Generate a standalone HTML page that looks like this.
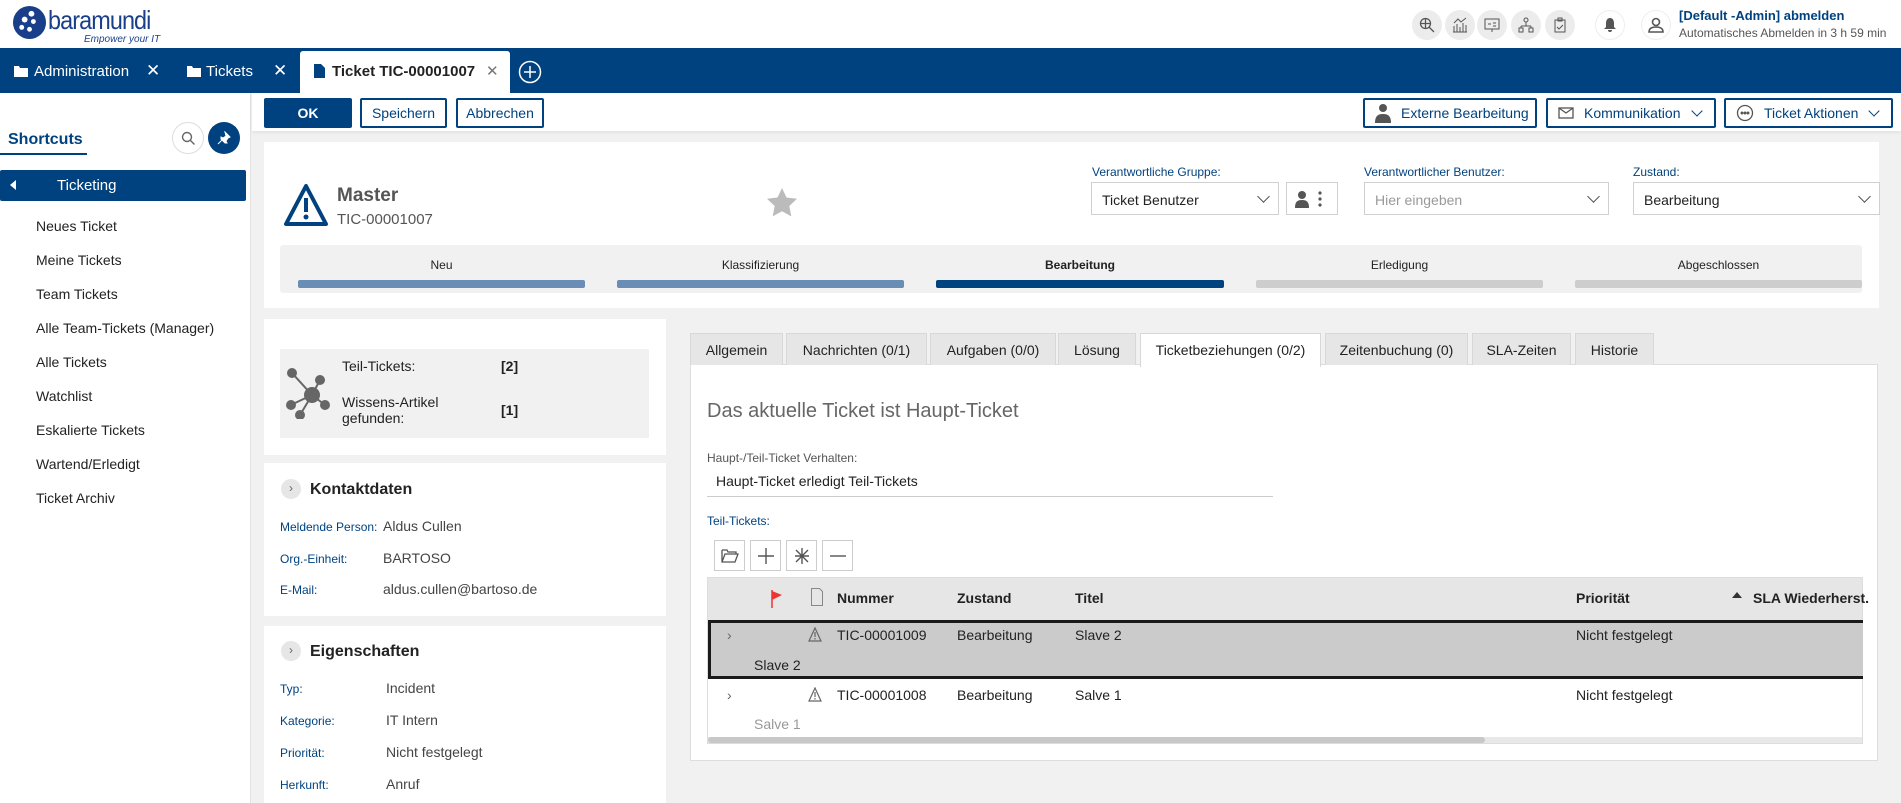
<!DOCTYPE html>
<html><head><meta charset="utf-8"><style>
*{box-sizing:border-box;margin:0;padding:0}
body{width:1901px;height:803px;overflow:hidden;background:#f1f1f1;font-family:"Liberation Sans",sans-serif;color:#222;position:relative;font-size:14px}
.a{position:absolute}
.hdr{left:0;top:0;width:1901px;height:48px;background:#fff}
.bar{left:0;top:48px;width:1901px;height:45px;background:#00427f}
.tab{color:#fff;font-size:15px;top:63px}
.circ{width:30px;height:30px;border-radius:50%;background:#ececec;top:10px;display:flex;align-items:center;justify-content:center}
.side{left:0;top:93px;width:251px;height:710px;background:#fff;border-right:1px solid #e2e2e2}
.mi{left:36px;font-size:14px;color:#222}
.btn{top:98px;height:30px;border:2px solid #00427f;background:#fff;color:#00427f;font-size:14px;display:flex;align-items:center;justify-content:center;border-radius:2px}
.card{background:#fff}
.lbl{font-size:12px;color:#00427f}
.sel{height:33px;border:1px solid #d0d0d0;background:#fff;font-size:14px;padding:9px 10px;color:#222}
.chev{position:absolute;right:10px;top:9px;width:9px;height:9px;border-right:1.5px solid #555;border-bottom:1.5px solid #555;transform:rotate(45deg)}
.pl{top:258px;font-size:12px;text-align:center}
.pb{top:280px;height:8px;border-radius:2px}
.tb{top:333px;height:32px;background:#e6e6e6;border:1px solid #d8d8d8;border-bottom:none;font-size:14px;padding-top:8px;text-align:center}
.th{font-weight:bold;font-size:14px;top:590px}
.td{font-size:14px}
.ib{top:540px;width:31px;height:31px;border:1px solid #ccc;background:#fff;display:flex;align-items:center;justify-content:center}
</style></head><body>
<div class="a hdr"></div>
<svg class="a" style="left:12px;top:5px" width="35" height="35" viewBox="0 0 36 36"><circle cx="18" cy="18" r="17" fill="#1a3f8a"/><circle cx="20" cy="9" r="3" fill="#fff"/><circle cx="13" cy="15" r="3" fill="#fff"/><circle cx="22" cy="17" r="2.5" fill="#fff"/><circle cx="10" cy="23" r="2.5" fill="#fff"/><circle cx="18" cy="25" r="2.5" fill="#fff"/></svg>
<div class="a" style="left:48px;top:5px;font-size:26px;color:#1a3f8a;letter-spacing:-1px;transform:scaleX(.9);transform-origin:left">baramundi</div>
<div class="a" style="left:84px;top:34px;font-size:10px;color:#1a3f8a;font-style:italic">Empower your IT</div>
<div class="a circ" style="left:1412px"><svg width="16" height="16" fill="none" stroke="#555" stroke-width="1.3"><circle cx="6.5" cy="6.5" r="5"/><path d="M2 6.5h9M6.5 2v9M10 10l5 5"/></svg></div>
<div class="a circ" style="left:1445px"><svg width="16" height="16" viewBox="0 0 16 16" fill="none" stroke="#555"><path d="M2 15V9M5 15V7M8 15V10M11 15V6M14 15V8M1 15h14M2 6l4-4 3 3 5-4"/></svg></div>
<div class="a circ" style="left:1477px"><svg width="16" height="16" viewBox="0 0 16 16" fill="none" stroke="#555"><rect x="1" y="2" width="14" height="10"/><path d="M8 12v3M4 7h3M9 6h3M9 9h3"/></svg></div>
<div class="a circ" style="left:1511px"><svg width="16" height="16" viewBox="0 0 16 16" fill="none" stroke="#555"><circle cx="8" cy="3" r="2"/><path d="M8 5v4M3 9h10M3 9v2M13 9v2"/><rect x="1" y="11" width="4" height="4"/><rect x="11" y="11" width="4" height="4"/></svg></div>
<div class="a circ" style="left:1545px"><svg width="16" height="16" viewBox="0 0 16 16" fill="none" stroke="#555"><rect x="3" y="3" width="10" height="12"/><rect x="6" y="1" width="4" height="3"/><path d="M5 10l2 2 4-4"/></svg></div>
<div class="a circ" style="left:1595px;background:#fff;border:1px solid #eee"><svg width="14" height="16" viewBox="0 0 14 16"><path d="M7 1c3 0 4 3 4 5v4l2 2H1l2-2V6c0-2 1-5 4-5zM5 13h4a2 2 0 0 1-4 0" fill="#555"/></svg></div>
<div class="a circ" style="left:1641px;background:#fff;border:1px solid #eee"><svg width="18" height="18" viewBox="0 0 18 18" fill="none" stroke="#555" stroke-width="1.6"><circle cx="9" cy="6" r="3.5"/><path d="M2 16c0-4 3-5 7-5s7 1 7 5z"/></svg></div>
<div class="a" style="left:1679px;top:8px;font-size:13px;font-weight:bold;color:#00427f">[Default -Admin] abmelden</div>
<div class="a" style="left:1679px;top:26px;font-size:12px;color:#555">Automatisches Abmelden in 3 h 59 min</div>

<div class="a bar"></div>
<svg class="a" style="left:14px;top:65px" width="14" height="12"><path d="M0 1h5l1 2h8v9H0z" fill="#fff"/></svg>
<div class="a tab" style="left:34px">Administration</div>
<div class="a tab" style="left:146px;top:61px;font-size:17px">✕</div>
<svg class="a" style="left:187px;top:65px" width="14" height="12"><path d="M0 1h5l1 2h8v9H0z" fill="#fff"/></svg>
<div class="a tab" style="left:206px">Tickets</div>
<div class="a tab" style="left:273px;top:61px;font-size:17px">✕</div>
<div class="a" style="left:300px;top:51px;width:210px;height:42px;background:#fff;border-radius:3px 3px 0 0"></div>
<svg class="a" style="left:314px;top:64px" width="11" height="14"><path d="M0 0h7l4 4v10H0z" fill="#00427f"/></svg>
<div class="a" style="left:332px;top:63px;font-size:15px;font-weight:bold;color:#222">Ticket TIC-00001007</div>
<div class="a" style="left:486px;top:62px;font-size:15px;color:#777">✕</div>
<svg class="a" style="left:518px;top:60px" width="24" height="24" fill="none" stroke="#fff" stroke-width="1.5"><circle cx="12" cy="12" r="10.5"/><path d="M12 6v12M6 12h12"/></svg>

<div class="a side"></div>
<div class="a" style="left:8px;top:131px;font-size:16px;font-weight:bold;color:#00427f">Shortcuts</div>
<div class="a" style="left:0;top:153px;width:87px;height:2px;background:#00427f"></div>
<div class="a" style="left:172px;top:122px;width:32px;height:32px;border-radius:50%;border:1px solid #ddd;background:#fff"></div>
<svg class="a" style="left:181px;top:131px" width="14" height="14" fill="none" stroke="#666" stroke-width="1.4"><circle cx="6" cy="6" r="4.5"/><path d="M9.5 9.5l4 4"/></svg>
<div class="a" style="left:208px;top:122px;width:32px;height:32px;border-radius:50%;background:#00427f"></div>
<svg class="a" style="left:217px;top:131px" width="14" height="14"><path d="M8 1l5 5-2 1-2 3 1 2-2 0-4-4 0-2 2 1 3-2z M5 9l-4 4" fill="#fff" stroke="#fff"/></svg>
<div class="a" style="left:0;top:170px;width:246px;height:31px;background:#00427f;border-radius:2px"></div>
<div class="a" style="left:10px;top:180px;width:0;height:0;border-top:5px solid transparent;border-bottom:5px solid transparent;border-right:6px solid #fff"></div>
<div class="a" style="left:57px;top:177px;color:#fff;font-size:15px">Ticketing</div>
<div class="a mi" style="top:218px">Neues Ticket</div>
<div class="a mi" style="top:252px">Meine Tickets</div>
<div class="a mi" style="top:286px">Team Tickets</div>
<div class="a mi" style="top:320px">Alle Team-Tickets (Manager)</div>
<div class="a mi" style="top:354px">Alle Tickets</div>
<div class="a mi" style="top:388px">Watchlist</div>
<div class="a mi" style="top:422px">Eskalierte Tickets</div>
<div class="a mi" style="top:456px">Wartend/Erledigt</div>
<div class="a mi" style="top:490px">Ticket Archiv</div>

<div class="a" style="left:252px;top:93px;width:1649px;height:38px;background:#fff;box-shadow:0 2px 3px rgba(0,0,0,.06)"></div>
<div class="a btn" style="left:264px;width:88px;background:#00427f;color:#fff;font-weight:bold">OK</div>
<div class="a btn" style="left:360px;width:87px">Speichern</div>
<div class="a btn" style="left:456px;width:88px">Abbrechen</div>
<div class="a btn" style="left:1363px;width:174px;justify-content:flex-start;padding-left:10px"><svg width="16" height="20" style="margin-right:10px"><circle cx="8" cy="5" r="4" fill="#555"/><path d="M0 20c0-7 3-9 8-9s8 2 8 9z" fill="#555"/></svg>Externe Bearbeitung</div>
<div class="a btn" style="left:1546px;width:170px;justify-content:flex-start;padding-left:10px"><svg width="16" height="12" style="margin-right:10px" fill="none" stroke="#555" stroke-width="1.3"><rect x="1" y="1" width="14" height="10"/><path d="M1 1l7 5 7-5"/></svg>Kommunikation<span style="margin-left:12px;display:inline-block;width:8px;height:8px;border-right:1.5px solid #00427f;border-bottom:1.5px solid #00427f;transform:rotate(45deg);margin-top:-5px"></span></div>
<div class="a btn" style="left:1724px;width:169px;justify-content:flex-start;padding-left:10px"><svg width="18" height="18" style="margin-right:10px" fill="none" stroke="#555" stroke-width="1.3"><circle cx="9" cy="9" r="7.5"/><circle cx="6" cy="9" r=".8" fill="#555"/><circle cx="9" cy="9" r=".8" fill="#555"/><circle cx="12" cy="9" r=".8" fill="#555"/></svg>Ticket Aktionen<span style="margin-left:12px;display:inline-block;width:8px;height:8px;border-right:1.5px solid #00427f;border-bottom:1.5px solid #00427f;transform:rotate(45deg);margin-top:-5px"></span></div>

<div class="a card" style="left:264px;top:142px;width:1615px;height:166px"></div>
<svg class="a" style="left:283px;top:183px" width="46" height="44"><path d="M23 3L3 41h40z" fill="none" stroke="#00427f" stroke-width="4" stroke-linejoin="round"/><path d="M23 15v14" stroke="#00427f" stroke-width="4"/><circle cx="23" cy="34" r="2.5" fill="#00427f"/></svg>
<div class="a" style="left:337px;top:185px;font-size:19px;font-weight:bold;color:#555">Master</div>
<div class="a" style="left:337px;top:211px;font-size:15px;color:#555">TIC-00001007</div>
<svg class="a" style="left:766px;top:187px" width="32" height="30"><path d="M16 1l4.5 9.5 10.5 1.3-7.7 7.2 2 10.4L16 24.2 6.7 29.4l2-10.4L1 11.8l10.5-1.3z" fill="#bbb"/></svg>
<div class="a lbl" style="left:1092px;top:165px">Verantwortliche Gruppe:</div>
<div class="a sel" style="left:1091px;top:182px;width:188px">Ticket Benutzer<span class="chev"></span></div>
<div class="a sel" style="left:1286px;top:182px;width:52px"><svg width="34" height="18" style="position:absolute;left:8px;top:7px"><circle cx="7" cy="5" r="4" fill="#555"/><path d="M0 18c0-6 2-8 7-8s7 2 7 8z" fill="#555"/><circle cx="25" cy="3" r="1.6" fill="#555"/><circle cx="25" cy="9" r="1.6" fill="#555"/><circle cx="25" cy="15" r="1.6" fill="#555"/></svg></div>
<div class="a lbl" style="left:1364px;top:165px">Verantwortlicher Benutzer:</div>
<div class="a sel" style="left:1364px;top:182px;width:245px;color:#999">Hier eingeben<span class="chev"></span></div>
<div class="a lbl" style="left:1633px;top:165px">Zustand:</div>
<div class="a sel" style="left:1633px;top:182px;width:247px">Bearbeitung<span class="chev"></span></div>
<div class="a" style="left:280px;top:245px;width:1582px;height:48px;background:#f1f1f1;border-radius:3px"></div>
<div class="a pl" style="left:298px;width:287px">Neu</div>
<div class="a pl" style="left:617px;width:287px">Klassifizierung</div>
<div class="a pl" style="left:936px;width:288px;font-weight:bold">Bearbeitung</div>
<div class="a pl" style="left:1256px;width:287px">Erledigung</div>
<div class="a pl" style="left:1575px;width:287px">Abgeschlossen</div>
<div class="a pb" style="left:298px;width:287px;background:#6a8db5"></div>
<div class="a pb" style="left:617px;width:287px;background:#6a8db5"></div>
<div class="a pb" style="left:936px;width:288px;background:#00427f"></div>
<div class="a pb" style="left:1256px;width:287px;background:#cdcdcd"></div>
<div class="a pb" style="left:1575px;width:287px;background:#cdcdcd"></div>

<div class="a card" style="left:264px;top:319px;width:402px;height:136px"></div>
<div class="a" style="left:280px;top:349px;width:369px;height:89px;background:#f1f1f1"></div>
<svg class="a" style="left:282px;top:363px" width="52" height="56" stroke="#666" stroke-width="2"><path d="M30 32L10 10M30 32L38 17M30 32L43 42M30 32L13 40M30 32L18 52"/><circle cx="30" cy="32" r="7" fill="#666"/><circle cx="10" cy="10" r="4" fill="#666"/><circle cx="38" cy="17" r="4" fill="#666"/><circle cx="43" cy="42" r="4" fill="#666"/><circle cx="9" cy="42" r="4" fill="#666"/><circle cx="18" cy="52" r="4" fill="#666"/></svg>
<div class="a td" style="left:342px;top:358px">Teil-Tickets:</div>
<div class="a td" style="left:501px;top:358px;font-weight:bold">[2]</div>
<div class="a td" style="left:342px;top:394px">Wissens-Artikel<br>gefunden:</div>
<div class="a td" style="left:501px;top:402px;font-weight:bold">[1]</div>

<div class="a card" style="left:264px;top:463px;width:402px;height:153px"></div>
<div class="a" style="left:281px;top:479px;width:20px;height:20px;border-radius:50%;background:#e6e6e6;color:#666;font-size:12px;text-align:center;line-height:19px">›</div>
<div class="a" style="left:310px;top:481px;font-size:16px;font-weight:bold">Kontaktdaten</div>
<div class="a lbl" style="left:280px;top:520px">Meldende Person:</div><div class="a td" style="left:383px;top:518px;color:#444">Aldus Cullen</div>
<div class="a lbl" style="left:280px;top:552px">Org.-Einheit:</div><div class="a td" style="left:383px;top:550px;color:#444">BARTOSO</div>
<div class="a lbl" style="left:280px;top:583px">E-Mail:</div><div class="a td" style="left:383px;top:581px;color:#444">aldus.cullen@bartoso.de</div>

<div class="a card" style="left:264px;top:626px;width:402px;height:177px"></div>
<div class="a" style="left:281px;top:641px;width:20px;height:20px;border-radius:50%;background:#e6e6e6;color:#666;font-size:12px;text-align:center;line-height:19px">›</div>
<div class="a" style="left:310px;top:643px;font-size:16px;font-weight:bold">Eigenschaften</div>
<div class="a lbl" style="left:280px;top:682px">Typ:</div><div class="a td" style="left:386px;top:680px;color:#444">Incident</div>
<div class="a lbl" style="left:280px;top:714px">Kategorie:</div><div class="a td" style="left:386px;top:712px;color:#444">IT Intern</div>
<div class="a lbl" style="left:280px;top:746px">Priorität:</div><div class="a td" style="left:386px;top:744px;color:#444">Nicht festgelegt</div>
<div class="a lbl" style="left:280px;top:778px">Herkunft:</div><div class="a td" style="left:386px;top:776px;color:#444">Anruf</div>

<div class="a" style="left:690px;top:364px;width:1188px;height:397px;background:#fff;border:1px solid #ddd"></div>
<div class="a tb" style="left:690px;width:93px">Allgemein</div>
<div class="a tb" style="left:786px;width:141px">Nachrichten (0/1)</div>
<div class="a tb" style="left:930px;width:126px">Aufgaben (0/0)</div>
<div class="a tb" style="left:1058px;width:78px">Lösung</div>
<div class="a tb" style="left:1140px;width:181px;background:#fff;height:34px">Ticketbeziehungen (0/2)</div>
<div class="a tb" style="left:1325px;width:143px">Zeitenbuchung (0)</div>
<div class="a tb" style="left:1472px;width:99px">SLA-Zeiten</div>
<div class="a tb" style="left:1575px;width:79px">Historie</div>
<div class="a" style="left:707px;top:400px;font-size:20px;color:#666">Das aktuelle Ticket ist Haupt-Ticket</div>
<div class="a" style="left:707px;top:451px;font-size:12px;color:#555">Haupt-/Teil-Ticket Verhalten:</div>
<div class="a td" style="left:716px;top:473px">Haupt-Ticket erledigt Teil-Tickets</div>
<div class="a" style="left:707px;top:496px;width:566px;height:1px;background:#ccc"></div>
<div class="a" style="left:707px;top:514px;font-size:12px;color:#00427f">Teil-Tickets:</div>
<div class="a ib" style="left:714px"><svg width="18" height="15" fill="none" stroke="#555" stroke-width="1.3"><path d="M1 2h5l1 2h8v2M1 2v12h13l3-8H4l-3 8"/></svg></div>
<div class="a ib" style="left:750px"><svg width="18" height="18" stroke="#555" stroke-width="1.4"><path d="M9 1v16M1 9h16"/></svg></div>
<div class="a ib" style="left:786px"><svg width="18" height="18" stroke="#555" stroke-width="1.4"><path d="M9 1v16M2 9h14M3 3l12 12M15 3L3 15"/></svg></div>
<div class="a ib" style="left:822px"><svg width="18" height="18" stroke="#555" stroke-width="1.4"><path d="M1 9h16"/></svg></div>

<div class="a" style="left:707px;top:577px;width:1156px;height:167px;border:1px solid #ddd;background:#fff"></div>
<div class="a" style="left:708px;top:578px;width:1154px;height:43px;background:#e6e6e6"></div>
<svg class="a" style="left:771px;top:590px" width="12" height="18"><path d="M1 0v18" stroke="#e33" stroke-width="1.5"/><path d="M1 1l10 4-10 5z" fill="#e33"/></svg>
<svg class="a" style="left:811px;top:588px" width="12" height="18" fill="none" stroke="#888"><path d="M.5 .5h8l3 3v14H.5z"/></svg>
<div class="a th" style="left:837px">Nummer</div>
<div class="a th" style="left:957px">Zustand</div>
<div class="a th" style="left:1075px">Titel</div>
<div class="a th" style="left:1576px">Priorität</div>
<div class="a" style="left:1732px;top:592px;width:0;height:0;border-left:5px solid transparent;border-right:5px solid transparent;border-bottom:6px solid #333"></div>
<div class="a th" style="left:1753px">SLA Wiederherst.</div>
<div class="a" style="left:708px;top:620px;width:1155px;height:59px;background:#cbcbcb;border:3px solid #1a1a1a;border-right:none"></div>
<div class="a td" style="left:727px;top:627px;color:#666">›</div>
<svg class="a" style="left:808px;top:627px" width="14" height="15" fill="none" stroke="#666" stroke-width="1.2"><path d="M7 1L1 14h12z M7 5v5M7 11v1.5"/></svg>
<div class="a td" style="left:837px;top:627px">TIC-00001009</div>
<div class="a td" style="left:957px;top:627px">Bearbeitung</div>
<div class="a td" style="left:1075px;top:627px">Slave 2</div>
<div class="a td" style="left:1576px;top:627px">Nicht festgelegt</div>
<div class="a td" style="left:754px;top:657px">Slave 2</div>
<div class="a td" style="left:727px;top:687px;color:#666">›</div>
<svg class="a" style="left:808px;top:687px" width="14" height="15" fill="none" stroke="#666" stroke-width="1.2"><path d="M7 1L1 14h12z M7 5v5M7 11v1.5"/></svg>
<div class="a td" style="left:837px;top:687px">TIC-00001008</div>
<div class="a td" style="left:957px;top:687px">Bearbeitung</div>
<div class="a td" style="left:1075px;top:687px">Salve 1</div>
<div class="a td" style="left:1576px;top:687px">Nicht festgelegt</div>
<div class="a td" style="left:754px;top:716px;color:#999">Salve 1</div>
<div class="a" style="left:708px;top:737px;width:1154px;height:6px;background:#e8e8e8"></div>
<div class="a" style="left:708px;top:737px;width:777px;height:6px;background:#c8c8c8;border-radius:3px"></div>
</body></html>
